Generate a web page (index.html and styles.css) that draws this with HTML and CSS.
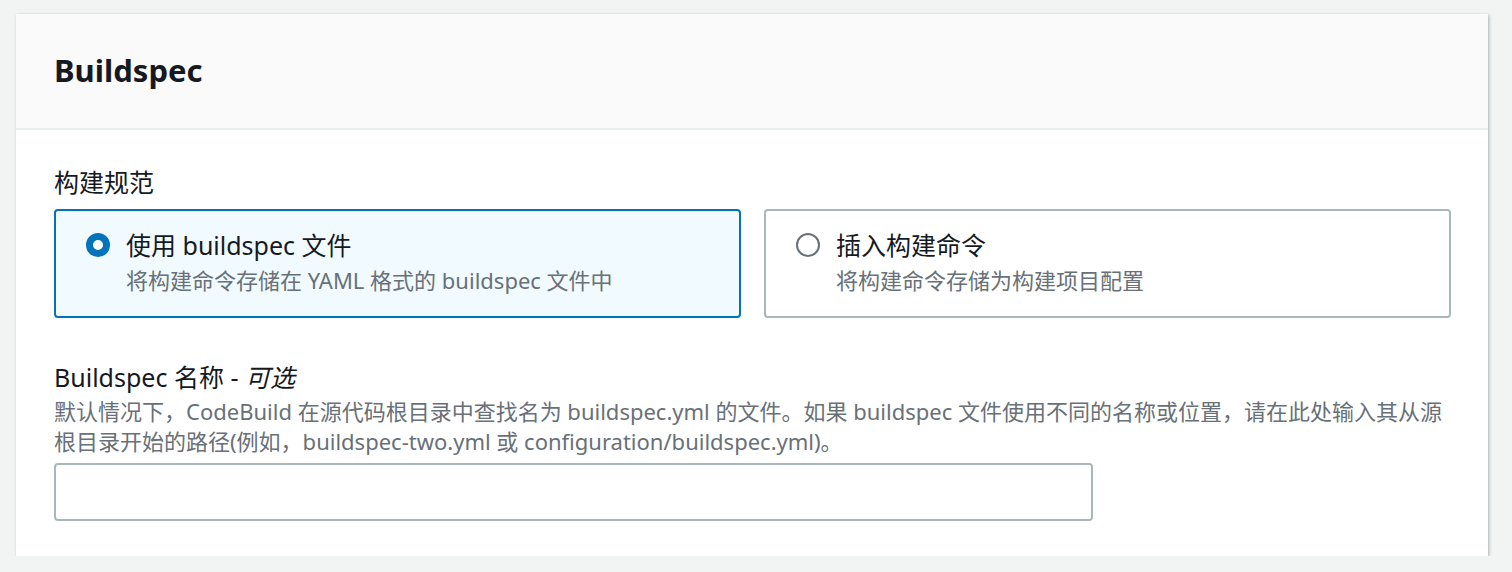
FILE: index.html
```html
<!DOCTYPE html>
<html lang="zh-CN">
<head>
    <meta charset="UTF-8">
    <title>Buildspec</title>
    <link rel="stylesheet" href="styles.css">
</head>
<body>
    <div class="container">
        <div class="header">
            <h2>Buildspec</h2>
        </div>
        <div class="content">
            <div class="field">
                <div class="label">构建规范</div>
                <div class="tiles">
                    <div class="tile selected">
                        <span class="radio checked"></span>
                        <div class="tile-text">
                            <div class="tile-title">使用 buildspec 文件</div>
                            <div class="tile-desc">将构建命令存储在 YAML 格式的 buildspec 文件中</div>
                        </div>
                    </div>
                    <div class="tile">
                        <span class="radio"></span>
                        <div class="tile-text">
                            <div class="tile-title">插入构建命令</div>
                            <div class="tile-desc">将构建命令存储为构建项目配置</div>
                        </div>
                    </div>
                </div>
            </div>

            <div class="field">
                <div class="label">Buildspec 名称 - <i>可选</i></div>
                <p class="description">默认情况下，CodeBuild 在源代码根目录中查找名为 buildspec.yml 的文件。如果 buildspec 文件使用不同的名称或位置，请在此处输入其从源<br>根目录开始的路径(例如，buildspec-two.yml 或 configuration/buildspec.yml)。</p>
                <input class="text-input" type="text">
            </div>
        </div>
    </div>
</body>
</html>
```

FILE: styles.css
```css
* {
    margin: 0;
    padding: 0;
    box-sizing: border-box;
    font-family: "Noto Sans", "Noto Sans CJK SC", sans-serif;
}

body {
    background: #f2f3f3;
    padding: 14px 24px 0 16px;
    color: #16191f;
}

.container {
    background: #fff;
    box-shadow: 1px 1px 3px rgba(0, 28, 36, 0.3);
    height: 542px;
}

.header {
    background: #fafafa;
    border-bottom: 2px solid #eaeded;
    height: 116px;
    padding: 0 38px 3px;
    display: flex;
    align-items: center;
}

.header h2 {
    font-size: 31px;
    font-weight: 700;
}

.content {
    padding: 35px 38px;
}

.field + .field {
    margin-top: 42px;
}

.label {
    font-size: 25px;
    line-height: 34px;
    margin-bottom: 10px;
}

.field .label + .description {
    margin-top: -8px;
}

.tiles {
    display: grid;
    grid-template-columns: 687px 687px;
    gap: 23px;
}

.tile {
    border: 2px solid #aab7b8;
    border-radius: 4px;
    height: 109px;
    padding: 17px 30px;
    display: flex;
    gap: 16px;
}

.tile.selected {
    background: #f1faff;
    border-color: #0073bb;
}

.radio {
    width: 24px;
    height: 24px;
    border: 2px solid #687078;
    border-radius: 50%;
    margin-top: 5px;
    flex-shrink: 0;
}

.radio.checked {
    border: 7px solid #0073bb;
    background: #fff;
}

.tile-title {
    font-size: 25px;
    line-height: 34px;
}

.tile-desc {
    font-size: 22px;
    line-height: 36px;
    color: #687078;
}

.description {
    font-size: 22px;
    line-height: 30px;
    color: #687078;
    margin-bottom: 7px;
}

.text-input {
    display: block;
    width: 1039px;
    height: 58px;
    border: 2px solid #aab7b8;
    border-radius: 4px;
    background: #fff;
}
```
